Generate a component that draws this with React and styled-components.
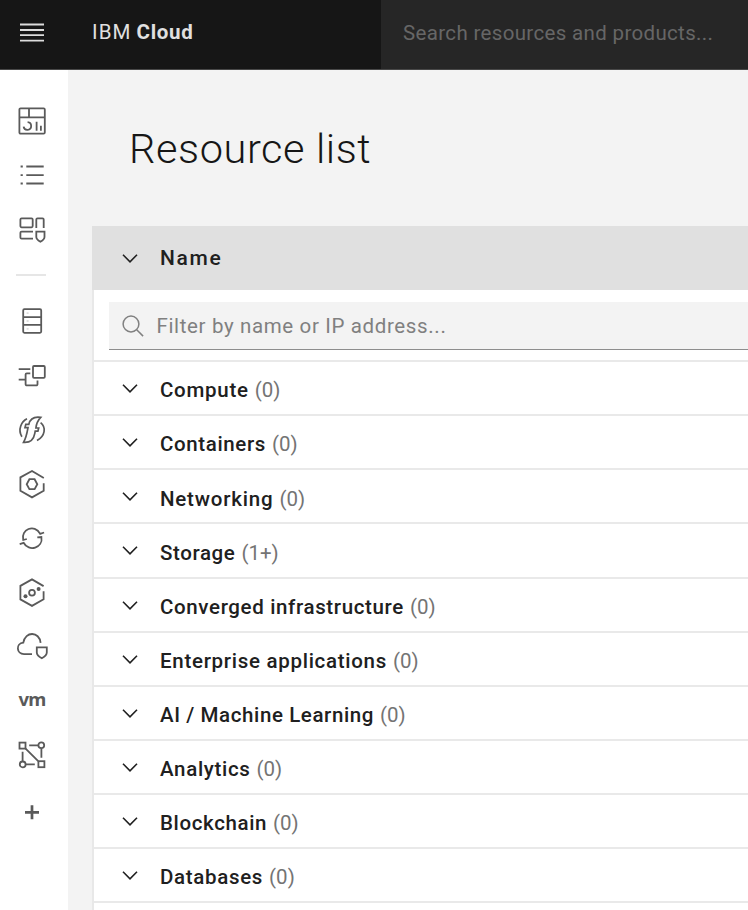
import React from "react";
import styled, { createGlobalStyle } from "styled-components";

const GlobalStyle = createGlobalStyle`
  * { box-sizing: border-box; }
  body {
    margin: 0;
    overflow: hidden;
    background: #f3f3f3;
    color: #202020;
    font-family: Roboto, "Liberation Sans", sans-serif;
  }
`;

const Page = styled.div`
  display: flex;
  flex-direction: column;
  width: 100%;
  height: 910px;
  overflow: hidden;
`;

const Header = styled.header`
  display: flex;
  flex: none;
  height: 70px;
  background: #161616;
  border-bottom: 1px solid #484848;
`;

const MenuButton = styled.button`
  display: flex;
  align-items: center;
  width: 92px;
  padding: 0 0 4px 16px;
  border: 0;
  background: none;
  color: #dcdcdc;
`;

const Brand = styled.div`
  display: flex;
  gap: 5px;
  width: 288.5px;
  padding-top: 20px;
  font-size: 20.5px;
  line-height: 24px;
  color: #e0e0e0;
`;

const BrandPrefix = styled.span`
  letter-spacing: 1.1px;
`;

const BrandName = styled.strong`
  font-weight: 700;
  letter-spacing: 0.7px;
`;

const SearchBar = styled.div`
  flex: 1;
  padding: 21px 0 0 22.5px;
  background: #262626;
  color: #666;
  font-size: 20.5px;
  line-height: 24px;
  letter-spacing: 0.34px;
  white-space: nowrap;
`;

const Body = styled.div`
  display: flex;
  flex: 1;
  min-height: 0;
`;

const Sidebar = styled.nav`
  display: flex;
  flex-direction: column;
  flex: none;
  width: 68px;
  padding-top: 24px;
  background: #fff;
`;

const NavItem = styled.a`
  display: flex;
  align-items: center;
  flex: none;
  height: ${(p) => p.$height || 54.15}px;
  padding-left: 16px;
  color: #5a5a5a;
`;

const Divider = styled.hr`
  flex: none;
  width: 30px;
  height: 2px;
  margin: 18px 0 18px 15.5px;
  border: 0;
  background: #e6e6e6;
`;

const Glyph = styled.svg`
  display: block;
  flex: none;
  width: ${(p) => p.$width || 32}px;
  height: ${(p) => p.$height || 32}px;
  overflow: visible;
  fill: none;
  stroke: currentColor;
  stroke-width: ${(p) => p.$stroke || 1.8};
`;

const VmMark = styled.span`
  width: 32px;
  padding-bottom: 2px;
  text-align: center;
  font-family: "Noto Sans", sans-serif;
  font-size: 18.5px;
  font-weight: 700;
  line-height: 24px;
  letter-spacing: -0.8px;
`;

const Main = styled.main`
  display: flex;
  flex-direction: column;
  flex: 1;
  min-width: 0;
  padding: 55px 0 0 24px;
`;

const Title = styled.h1`
  margin: 0 0 53px;
  padding-left: 37px;
  color: #161616;
  font-size: 41.5px;
  font-weight: 350;
  line-height: 48px;
  letter-spacing: 0.6px;
`;

const Table = styled.section`
  flex: 1;
  border-left: 2px solid #e8e8e8;
  background: #fff;
`;

const TableHead = styled.div`
  display: flex;
  align-items: center;
  height: 64px;
  margin-left: -2px;
  padding-left: 29.5px;
  background: #e0e0e0;
`;

const HeadLabel = styled.span`
  margin-left: 22.5px;
  font-size: 21px;
  font-weight: 500;
  line-height: 24px;
  letter-spacing: 1.7px;
`;

const FilterArea = styled.div`
  height: 72px;
  padding: 12px 0 0 15px;
  border-bottom: 2px solid #e9e9e9;
`;

const FilterField = styled.div`
  display: flex;
  align-items: center;
  gap: 13px;
  height: 48px;
  padding-left: 12.5px;
  border-bottom: 1px solid #8d8d8d;
  background: #f3f3f3;
  color: #808080;
  font-size: 20.5px;
  line-height: 24px;
  letter-spacing: 0.64px;
  white-space: nowrap;
`;

const Row = styled.div`
  display: flex;
  align-items: center;
  height: 54.13px;
  padding: 1px 0 0 27.5px;
  border-bottom: 2px solid #e9e9e9;
`;

const RowText = styled.div`
  display: flex;
  gap: 6px;
  margin-left: 22.5px;
  padding-top: 3.6px;
  font-size: 20.5px;
  line-height: 24px;
`;

const RowName = styled.span`
  font-weight: 500;
  letter-spacing: ${(p) => p.$spacing}px;
`;

const RowCount = styled.span`
  color: #747474;
`;

const groups = [
  { name: "Compute", count: "(0)", spacing: 0.72 },
  { name: "Containers", count: "(0)", spacing: 0.62 },
  { name: "Networking", count: "(0)", spacing: 0.8 },
  { name: "Storage", count: "(1+)", spacing: 0.6 },
  { name: "Converged infrastructure", count: "(0)", spacing: 0.64 },
  { name: "Enterprise applications", count: "(0)", spacing: 0.71 },
  { name: "AI / Machine Learning", count: "(0)", spacing: 0.6 },
  { name: "Analytics", count: "(0)", spacing: 0.68 },
  { name: "Blockchain", count: "(0)", spacing: 0.63 },
  { name: "Databases", count: "(0)", spacing: 0.68 },
];

const Chevron = () => (
  <Glyph viewBox="0 0 16 9" $width={16} $height={9} $stroke={1.6}>
    <path d="M1 .8 8 7.8 15 .8" />
  </Glyph>
);

const SearchIcon = () => (
  <Glyph viewBox="0 0 22 22" $width={22} $height={22} $stroke={1.5}>
    <circle cx="9" cy="9" r="7.9" />
    <path d="m14.7 14.7 6.4 6.4" />
  </Glyph>
);

const MenuIcon = () => (
  <Glyph viewBox="0 0 32 32" $stroke={1.8}>
    <path d="M4 7.5h24M4 13h24M4 18.1h24M4 23.6h24" />
  </Glyph>
);

const DashboardIcon = () => (
  <Glyph viewBox="0 0 32 32">
    <rect x="3.4" y="3.4" width="25.4" height="25.2" rx="1.2" />
    <path d="M3.4 12.3h25.4M13 3.4v8.9M11.6 17.2a3.8 3.8 0 1 1-4 4.4M20.6 16.8v9M24.9 20.8v5" />
  </Glyph>
);

const ListIcon = () => (
  <Glyph viewBox="0 0 32 32">
    <path d="M10.3 7.5h17.4M10.3 16.1h17.4M10.3 24.5h17.4M4.6 7.5h2.2M4.6 16.1h2.2M4.6 24.5h2.2" />
  </Glyph>
);

const CatalogIcon = () => (
  <Glyph viewBox="0 0 32 32">
    <rect x="4.4" y="5.3" width="12.3" height="9" rx="1.2" />
    <path d="M20.3 14.9V6.5a1.2 1.2 0 0 1 1.2-1.2h5a1.2 1.2 0 0 1 1.2 1.2v8.4M17 18.6H5.6a1.2 1.2 0 0 0-1.2 1.2v4.6a1.2 1.2 0 0 0 1.2 1.2H17M20.3 18.6h8.2V24c0 2-1.4 3.2-4.1 4.8-2.7-1.6-4.1-2.8-4.1-4.8z" />
  </Glyph>
);

const ServerIcon = () => (
  <Glyph viewBox="0 0 32 32">
    <rect x="7.2" y="4.2" width="18" height="23.6" rx="1.2" />
    <path d="M7.2 12.1h18M7.2 19.9h18" />
    <path opacity=".2" d="M10.6 8.1h2M10.6 16h2M10.6 23.8h2" />
  </Glyph>
);

const InstanceIcon = () => (
  <Glyph viewBox="0 0 32 32">
    <rect x="17" y="6" width="11.8" height="11.8" rx="1" />
    <path d="M2.7 9.1h11.6M2.7 19.6h6.9M14.3 13.4h-3.5a1.2 1.2 0 0 0-1.2 1.2v9.6a1.2 1.2 0 0 0 1.2 1.2h9.5a1.2 1.2 0 0 0 1.2-1.2v-3.8" />
  </Glyph>
);

const FunctionsIcon = () => (
  <Glyph viewBox="0 0 32 32" $stroke={1.7}>
    <path d="M11 4.8C5.6 7.4 1.4 15.2 5.9 22.8M24.6 8.6c5.7 4.6 4.7 13.2-3.6 18" />
    <path d="M24.7 3.4C17.5 2.4 14.1 4.6 12.8 10.4H9.8L9 13.6h3c-1.3 7.6-1.9 10.4-4.5 14.8 7.1.6 10.2-2.8 11.3-9l.4-2.2h2.7l.8-3.2h-2.8c.5-4.6 1.2-6.8 4.8-10.6z" />
  </Glyph>
);

const KubernetesIcon = () => (
  <Glyph viewBox="0 0 32 32">
    <path d="M27.8 10 16 3 4.4 9.4v13.4L16 29.4l11.7-6.6v-7.6" />
    <path d="M13.4 11.2h5.2l2.7 5-2.7 5h-5.2l-2.7-5z" />
  </Glyph>
);

const RotateIcon = () => (
  <Glyph viewBox="0 0 32 32">
    <path d="M10.8 17 7.2 18C4.5 7.7 18.5 1.1 24.2 11.8l3.9-1.3M21.3 15.4l4.1-.4c2 10.8-12.6 15.4-17.8 5.8l-3.9 1.3" />
  </Glyph>
);

const SatelliteIcon = () => (
  <Glyph viewBox="0 0 32 32">
    <path d="M27.6 10.1 16 3.4 4.4 9.9v13.5L16 29.9l11.6-6.6v-8" />
    <circle cx="16" cy="16.7" r="2.9" />
    <g fill="currentColor" stroke="none">
      <circle cx="22.6" cy="13" r="2" />
      <circle cx="9.5" cy="20.3" r="2" />
    </g>
  </Glyph>
);

const CloudShieldIcon = () => (
  <Glyph viewBox="0 0 32 32">
    <path d="M16 24.1H8c-7.6 0-8.5-10.7-.7-11.4C9.2.9 23.4 1.3 24.6 12.8M20.8 17.3h10v5.2c0 2.3-1.7 4-5 5.7-3.3-1.7-5-3.4-5-5.7z" />
  </Glyph>
);

const NetworkIcon = () => (
  <Glyph viewBox="0 0 32 32">
    <rect x="3.5" y="3.6" width="6" height="6" />
    <rect x="22.4" y="22.2" width="6" height="6" />
    <circle cx="25.3" cy="6.3" r="2.9" />
    <circle cx="6.7" cy="25.4" r="2.9" />
    <path d="M13.2 6.4h9.2M25.4 9.4v9.4M6.6 12.8v9.4M9.7 25.4h9.1M9.6 9.7l12.6 12.4" />
  </Glyph>
);

const PlusIcon = () => (
  <Glyph viewBox="0 0 32 32" $stroke={2.7}>
    <path d="M9 16.3h14M16 9.3v14" />
  </Glyph>
);

export default function App() {
  return (
    <Page>
      <GlobalStyle />
      <Header>
        <MenuButton aria-label="Menu"><MenuIcon /></MenuButton>
        <Brand>
          <BrandPrefix>IBM</BrandPrefix>
          <BrandName>Cloud</BrandName>
        </Brand>
        <SearchBar>Search resources and products...</SearchBar>
      </Header>
      <Body>
        <Sidebar>
          <NavItem><DashboardIcon /></NavItem>
          <NavItem><ListIcon /></NavItem>
          <NavItem><CatalogIcon /></NavItem>
          <Divider />
          <NavItem><ServerIcon /></NavItem>
          <NavItem><InstanceIcon /></NavItem>
          <NavItem><FunctionsIcon /></NavItem>
          <NavItem><KubernetesIcon /></NavItem>
          <NavItem><RotateIcon /></NavItem>
          <NavItem><SatelliteIcon /></NavItem>
          <NavItem><CloudShieldIcon /></NavItem>
          <NavItem><VmMark>vm</VmMark></NavItem>
          <NavItem><NetworkIcon /></NavItem>
          <NavItem $height={61.5}><PlusIcon /></NavItem>
        </Sidebar>
        <Main>
          <Title>Resource list</Title>
          <Table>
            <TableHead>
              <Chevron />
              <HeadLabel>Name</HeadLabel>
            </TableHead>
            <FilterArea>
              <FilterField>
                <SearchIcon />
                Filter by name or IP address...
              </FilterField>
            </FilterArea>
            {groups.map((g) => (
              <Row key={g.name}>
                <Chevron />
                <RowText>
                  <RowName $spacing={g.spacing}>{g.name}</RowName>
                  <RowCount>{g.count}</RowCount>
                </RowText>
              </Row>
            ))}
          </Table>
        </Main>
      </Body>
    </Page>
  );
}
